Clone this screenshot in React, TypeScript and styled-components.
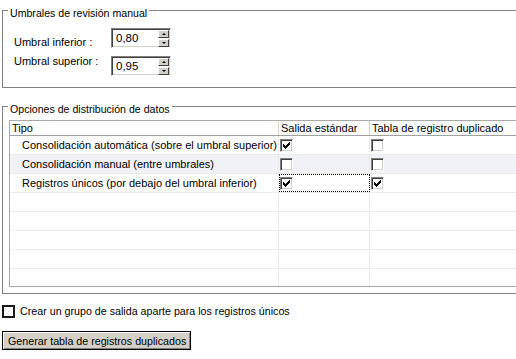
import React from 'react';
import styled, { createGlobalStyle } from 'styled-components';

const UI_FONT = '"Liberation Sans", Arial, sans-serif';
const GRID_FONT = '"Liberation Sans", Arial, sans-serif';

const Global = createGlobalStyle`
  html, body { margin: 0; padding: 0; background: #ffffff; }
  body {
    width: 516px;
    height: 359px;
    overflow: hidden;
    font-family: ${UI_FONT};
    font-size: 11px;
    color: #000;
  }
  * { box-sizing: border-box; }
`;

const Page = styled.div`
  width: 516px;
  height: 359px;
  overflow: hidden;
  display: flex;
  flex-direction: column;
  align-items: flex-start;
`;

const GroupBox = styled.fieldset<{ $mt: number }>`
  flex-shrink: 0;
  margin: ${(p) => p.$mt}px 0 0 2px;
  padding: 0;
  width: 580px;
  min-width: 0;
  border: 1px solid #808080;
`;

const Legend = styled.legend`
  margin-left: 5px;
  padding: 7px 2px 0 2px;
  line-height: 13px;
  font-size: 10.6px;
  font-family: ${UI_FONT};
`;

const ThresholdGrid = styled.div`
  display: grid;
  grid-template-columns: 97px 60px;
  row-gap: 7px;
  padding: 8px 0 11px 11px;
`;

const FieldLabel = styled.div<{ $shift: number }>`
  margin-top: ${(p) => p.$shift}px;
  line-height: 13px;
  white-space: nowrap;
`;

const SpinBox = styled.div`
  width: 60px;
  height: 20px;
  display: flex;
  align-items: center;
  padding: 0 1px 0 4px;
  background: #fff;
  border: 1px solid;
  border-color: #808080 #ffffff #ffffff #808080;
  box-shadow: inset 1px 1px 0 #404040, inset -1px -1px 0 #d4d0c8;
`;

const SpinValue = styled.span`
  font-size: 11.5px;
  line-height: 13px;
  color: #000010;
`;

const SpinButtons = styled.div`
  margin-left: auto;
  display: flex;
  flex-direction: column;
  gap: 1px;
`;

const SpinButton = styled.div`
  width: 11px;
  height: 8px;
  background: #d4d0c8;
  border: 1px solid;
  border-color: #ffffff #404040 #404040 #ffffff;
  display: flex;
  align-items: center;
  justify-content: center;
`;

const Arrow = styled.span<{ $down?: boolean }>`
  width: 0;
  height: 0;
  border-left: 2px solid transparent;
  border-right: 2px solid transparent;
  ${(p) => (p.$down ? 'border-top: 2px solid #000;' : 'border-bottom: 2px solid #000;')}
`;

const Grid = styled.div`
  margin: 4px 0 6px 6px;
  width: 600px;
  border: 1px solid #a9a9a9;
  border-right: none;
  font-family: ${GRID_FONT};
  font-size: 11px;
`;

const HeaderRow = styled.div`
  display: grid;
  grid-template-columns: 269px 91px 1fr;
  height: 15px;
  border-bottom: 1px solid #a0a0a0;
`;

const HeaderCell = styled.div`
  padding-left: 2px;
  line-height: 14px;
  border-right: 1px solid #d5d5d5;
  white-space: nowrap;
  overflow: hidden;
`;

const Body = styled.div`
  height: 150px;
  overflow: hidden;
  display: flex;
  flex-direction: column;
`;

const Row = styled.div<{ $alt?: boolean }>`
  flex-shrink: 0;
  display: grid;
  grid-template-columns: 269px 91px 1fr;
  height: 19px;
  border-bottom: 1px solid #ececec;
  background: ${(p) => (p.$alt ? '#f0f2f7' : '#ffffff')};
`;

const Cell = styled.div<{ $pad?: number; $focus?: boolean }>`
  display: flex;
  align-items: center;
  padding-left: ${(p) => p.$pad ?? 1}px;
  border-right: 1px solid #ececec;
  white-space: nowrap;
  overflow: hidden;
  ${(p) => (p.$focus ? 'outline: 1px dotted #000; outline-offset: -1px;' : '')}
`;

const Check3D = styled.span`
  width: 13px;
  height: 13px;
  flex-shrink: 0;
  background: #fff;
  border: 1px solid;
  border-color: #808080 #ffffff #ffffff #808080;
  box-shadow: inset 1px 1px 0 #404040, inset -1px -1px 0 #d4d0c8;
  display: flex;
  align-items: center;
  justify-content: center;
`;

const CheckMark = () => (
  <svg width="7" height="7" viewBox="0 0 7 7">
    <path d="M0 2h1v1h1v1h1V3h1V2h1V1h1V0h1v3h-1v1h-1v1h-1v1h-1v1H2V6H1V5H0z" fill="#000" />
  </svg>
);

const OptionRow = styled.label`
  margin: 10px 0 0 2px;
  display: flex;
  align-items: center;
  gap: 5px;
  height: 14px;
  line-height: 14px;
  font-size: 10.7px;
  white-space: nowrap;
`;

const FlatCheck = styled.span`
  width: 13px;
  height: 13px;
  border: 2px solid #1a1a1a;
  background: #fff;
`;

const Button = styled.button`
  margin: 13px 0 0 2px;
  width: 189px;
  height: 19px;
  padding: 0 0 0 5px;
  text-align: left;
  font-family: ${UI_FONT};
  font-size: 10.7px;
  color: #000;
  background: #d4d0c8;
  border: 1px solid #000;
  box-shadow: inset 1px 1px 0 #ffffff, inset -1px -1px 0 #808080;
  white-space: nowrap;
`;

type RowData = { label: string; std: boolean; dup: boolean; focus?: boolean };

const rows: RowData[] = [
  { label: 'Consolidación automática (sobre el umbral superior)', std: true, dup: false },
  { label: 'Consolidación manual (entre umbrales)', std: false, dup: false },
  { label: 'Registros únicos (por debajo del umbral inferior)', std: true, dup: true, focus: true },
];

const Box = ({ checked }: { checked: boolean }) => <Check3D>{checked && <CheckMark />}</Check3D>;

const Spin = ({ value }: { value: string }) => (
  <SpinBox>
    <SpinValue>{value}</SpinValue>
    <SpinButtons>
      <SpinButton>
        <Arrow />
      </SpinButton>
      <SpinButton>
        <Arrow $down />
      </SpinButton>
    </SpinButtons>
  </SpinBox>
);

export default function App() {
  return (
    <Page>
      <Global />
      <GroupBox $mt={0}>
        <Legend>Umbrales de revisión manual</Legend>
        <ThresholdGrid>
          <FieldLabel $shift={8}>Umbral inferior :</FieldLabel>
          <Spin value="0,80" />
          <FieldLabel $shift={-1}>Umbral superior :</FieldLabel>
          <Spin value="0,95" />
        </ThresholdGrid>
      </GroupBox>
      <GroupBox $mt={8}>
        <Legend>Opciones de distribución de datos</Legend>
        <Grid>
          <HeaderRow>
            <HeaderCell>Tipo</HeaderCell>
            <HeaderCell>Salida estándar</HeaderCell>
            <HeaderCell>Tabla de registro duplicado</HeaderCell>
          </HeaderRow>
          <Body>
            {rows.map((r, i) => (
              <Row key={r.label} $alt={i === 1}>
                <Cell $pad={12}>{r.label}</Cell>
                <Cell $focus={r.focus}>
                  <Box checked={r.std} />
                </Cell>
                <Cell>
                  <Box checked={r.dup} />
                </Cell>
              </Row>
            ))}
            {[0, 1, 2, 3, 4].map((k) => (
              <Row key={`e${k}`}>
                <Cell />
                <Cell />
                <Cell />
              </Row>
            ))}
          </Body>
        </Grid>
      </GroupBox>
      <OptionRow>
        <FlatCheck />
        Crear un grupo de salida aparte para los registros únicos
      </OptionRow>
      <Button>Generar tabla de registros duplicados</Button>
    </Page>
  );
}
